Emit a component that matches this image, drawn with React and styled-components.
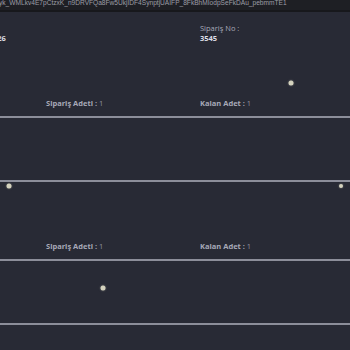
import React from "react"
import styled, { createGlobalStyle } from "styled-components"

const colors = {
  bar: "#1e1f24",
  barEdge: "#17181c",
  background: "#282a35",
  line: "#8c8e9a",
  label: "#a7a9b8",
  value: "#dcdde4",
  dot: "#d4d2be",
}

const GlobalStyle = createGlobalStyle`
  html, body {
    margin: 0;
    padding: 0;
    background: ${colors.background};
    overflow: hidden;
  }
  body {
    font-family: "Open Sans", "DejaVu Sans", sans-serif;
  }
`

const Page = styled.div`
  position: relative;
  width: 350px;
  height: 350px;
  overflow: hidden;
  background: ${colors.background};
`

const UrlBar = styled.div`
  height: 10px;
  background: ${colors.bar};
  border-bottom: 2px solid ${colors.barEdge};
  overflow: hidden;
  white-space: nowrap;
  font-family: "Liberation Sans", Arial, sans-serif;
  font-size: 6.6px;
  line-height: 9px;
  color: #9d9ea6;
`

const UrlText = styled.span`
  display: block;
  margin-top: -2px;
  margin-left: -1px;
`

const Header = styled.div`
  display: grid;
  grid-template-columns: 154px 1fr;
  height: 27px;
  padding-left: 46px;
  padding-top: 11px;
  box-sizing: border-box;
`

const InfoCell = styled.div`
  display: flex;
  flex-direction: column;
  margin-left: ${({ $shift }) => $shift || 0}px;
  white-space: nowrap;
`

const InfoLabel = styled.span`
  font-size: 7.5px;
  line-height: 10px;
  color: ${colors.label};
`

const InfoValue = styled.span`
  font-size: 7.5px;
  line-height: 10px;
  font-weight: 700;
  color: ${colors.value};
`

const Card = styled.section`
  display: flex;
  flex-direction: column;
`

const CountRow = styled.div`
  display: grid;
  grid-template-columns: 154px 1fr;
  align-items: end;
  height: 77px;
  padding: 0 0 8px 46px;
  box-sizing: border-box;
`

const Count = styled.span`
  font-size: 7.5px;
  line-height: 10px;
  font-weight: 700;
  color: ${colors.label};
  white-space: nowrap;

  b {
    font-weight: 400;
    color: #8f91a0;
  }
`

const Divider = styled.hr`
  margin: 0;
  border: 0;
  height: 2px;
  background: ${colors.line};
`

const CardBody = styled.div`
  height: 62px;
`

const Dot = styled.span`
  position: absolute;
  width: ${({ $size }) => $size}px;
  height: ${({ $size }) => $size}px;
  border-radius: 50%;
  background: ${colors.dot};
  box-shadow: 0 0 2px rgba(212, 210, 190, 0.5);
  transform: translate(-50%, -50%);
`

const dots = [
  { x: 291, y: 83, size: 5 },
  { x: 9, y: 186, size: 5 },
  { x: 341, y: 186, size: 4 },
  { x: 103, y: 288, size: 5 },
]

const orders = [
  { ordered: 1, remaining: 1 },
  { ordered: 1, remaining: 1 },
]

const App = () => (
  <>
    <GlobalStyle />
    <Page>
      <UrlBar>
        <UrlText>
          yk_WMLkv4E7pCtzxK_n9DRVFQa8Fw5UkjIDF4SynptjUAIFP_8FkBhMIodpSeFkDAu_pebmmTE1
        </UrlText>
      </UrlBar>
      <Header>
        <InfoCell $shift={-100}>
          <InfoLabel>Tarih :</InfoLabel>
          <InfoValue>14.02.2024 10:26</InfoValue>
        </InfoCell>
        <InfoCell>
          <InfoLabel>Sipariş No :</InfoLabel>
          <InfoValue>3545</InfoValue>
        </InfoCell>
      </Header>
      {orders.map(({ ordered, remaining }, key) => (
        <Card key={key}>
          <CountRow>
            <Count>
              Sipariş Adeti : <b>{ordered}</b>
            </Count>
            <Count>
              Kalan Adet : <b>{remaining}</b>
            </Count>
          </CountRow>
          <Divider />
          <CardBody />
          <Divider />
        </Card>
      ))}
      {dots.map(({ x, y, size }, key) => (
        <Dot key={key} $size={size} style={{ left: x, top: y }} />
      ))}
    </Page>
  </>
)

export default App
